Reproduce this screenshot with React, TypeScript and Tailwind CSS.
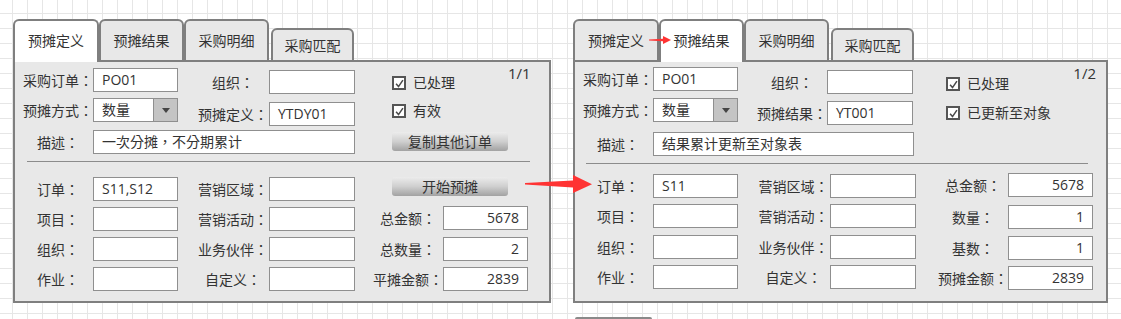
import React from "react"

const inputCls =
  "h-[24px] border border-[#8f8f8f] bg-white px-[8px] leading-[22px] whitespace-nowrap overflow-hidden"

type FieldProps = {
  label: string
  value?: string
  right?: boolean
  labelW?: string
  inputW?: string
  className?: string
}

function Field({ label, value, right, labelW = "w-[70px]", inputW = "w-[85px]", className = "" }: FieldProps) {
  return (
    <div className={`flex items-center ${className}`}>
      <div className={`${labelW} shrink-0 text-center whitespace-nowrap`}>{label}</div>
      <div className={`${inputCls} ${inputW} ${right ? "text-right" : ""}`}>{value}</div>
    </div>
  )
}

function SelectField() {
  return (
    <div className="flex items-center">
      <div className="w-[70px] shrink-0 text-center">预摊方式：</div>
      <div className="flex h-[24px] w-[85px] border border-[#8f8f8f] bg-white">
        <div className="flex-1 px-[8px] leading-[22px]">数量</div>
        <div className="flex w-[24px] items-center justify-center border-l border-[#8f8f8f] bg-[#c4c4c4]">
          <div className="h-0 w-0 border-t-[5px] border-r-[4px] border-l-[4px] border-t-[#454545] border-r-transparent border-l-transparent" />
        </div>
      </div>
    </div>
  )
}

function Check({ label, className = "" }: { label: string; className?: string }) {
  return (
    <div className={`flex h-[14px] items-center gap-[7px] ${className}`}>
      <div className="flex h-[14px] w-[14px] shrink-0 items-center justify-center border-2 border-[#555] bg-white">
        <svg viewBox="0 0 10 10" className="h-[9px] w-[9px]">
          <path d="M1.2 5.4 L3.9 8.4 L8.8 1.2" fill="none" stroke="#4a4a4a" strokeWidth="1.7" />
        </svg>
      </div>
      <span className="whitespace-nowrap leading-[20px]">{label}</span>
    </div>
  )
}

function Btn({ children, className = "" }: { children: React.ReactNode; className?: string }) {
  return (
    <div
      className={`h-[19px] w-[116px] rounded-[3px] bg-linear-to-b from-[#ececec] via-[#cfcfcf] to-[#a2a2a2] text-center leading-[19px] ${className}`}
    >
      {children}
    </div>
  )
}

function Tabs({ active }: { active: number }) {
  const names = ["预摊定义", "预摊结果", "采购明细"]
  return (
    <div className="relative z-10 -mb-[2px] flex items-end">
      {names.map((n, i) => (
        <div
          key={n}
          className={`flex items-center justify-center rounded-t-[6px] border-2 border-[#7f7f7f] ${
            i === 0 ? "w-[86px]" : "w-[85px]"
          } h-[43px] ${i === active ? "border-b-0 bg-white pb-[2px]" : "bg-[#e8e8e8]"}`}
        >
          {n}
        </div>
      ))}
      <div className="ml-[2px] flex h-[34px] w-[83px] items-center justify-center rounded-t-[6px] border-2 border-[#7f7f7f] bg-[#e8e8e8]">
        采购匹配
      </div>
    </div>
  )
}

function LeftPanel() {
  return (
    <div className="flex flex-col">
      <Tabs active={0} />
      <div className="flex h-[243px] w-[538px] flex-col border-2 border-[#7f7f7f] bg-[#e8e8e8]">
        <div className="flex items-start">
          <div className="ml-[8px] flex flex-col">
            <div className="mt-[6px] flex items-start">
              <Field label="采购订单：" value="PO01" />
              <Field className="mt-[2px] ml-[19px]" label="组织：" labelW="w-[72px]" inputW="w-[86px]" />
            </div>
            <div className="mt-[4px] flex items-start">
              <SelectField />
              <Field
                className="mt-[4px] ml-[19px]"
                label="预摊定义："
                value="YTDY01"
                labelW="w-[72px]"
                inputW="w-[86px]"
              />
            </div>
            <Field className="mt-[4px]" label="描述：" value="一次分摊，不分期累计" inputW="w-[262px]" />
          </div>
          <div className="ml-[37px] flex flex-col">
            <Check className="mt-[14px]" label="已处理" />
            <Check className="mt-[14px]" label="有效" />
            <Btn className="mt-[14px]">复制其他订单</Btn>
          </div>
          <div className="mt-[1px] mr-[20px] ml-auto text-[15px] leading-[20px]">1/1</div>
        </div>
        <div className="mt-[7px] ml-[12px] h-px w-[503px] bg-[#8c8c8c]" />
        <div className="mt-[15px] ml-[8px] flex items-start">
          <div className="flex flex-col gap-[6px]">
            <Field label="订单：" value="S11,S12" />
            <Field label="项目：" />
            <Field label="组织：" />
            <Field label="作业：" />
          </div>
          <div className="ml-[19px] flex flex-col gap-[6px]">
            <Field label="营销区域：" labelW="w-[72px]" inputW="w-[86px]" />
            <Field label="营销活动：" labelW="w-[72px]" inputW="w-[86px]" />
            <Field label="业务伙伴：" labelW="w-[72px]" inputW="w-[86px]" />
            <Field label="自定义：" labelW="w-[72px]" inputW="w-[86px]" />
          </div>
          <div className="ml-[18px] flex flex-col">
            <Btn className="ml-[19px]">开始预摊</Btn>
            <Field className="mt-[10px]" label="总金额：" value="5678" right />
            <Field className="mt-[7px]" label="总数量：" value="2" right />
            <Field className="mt-[6px]" label="平摊金额：" value="2839" right />
          </div>
        </div>
      </div>
    </div>
  )
}

function RightPanel() {
  return (
    <div className="flex flex-col">
      <Tabs active={1} />
      <div className="flex h-[243px] w-[535px] flex-col border-2 border-[#7f7f7f] bg-[#e8e8e8]">
        <div className="flex items-start">
          <div className="ml-[8px] flex flex-col">
            <div className="mt-[5px] flex items-start">
              <Field label="采购订单：" value="PO01" />
              <Field className="mt-[3px] ml-[19px]" label="组织：" inputW="w-[86px]" />
            </div>
            <div className="mt-[4px] flex items-start">
              <SelectField />
              <Field className="mt-[3px] ml-[19px]" label="预摊结果：" value="YT001" inputW="w-[86px]" />
            </div>
            <Field className="mt-[7px]" label="描述：" value="结果累计更新至对象表" inputW="w-[261px]" />
          </div>
          <div className="ml-[32px] flex flex-col">
            <Check className="mt-[15px]" label="已处理" />
            <Check className="mt-[15px]" label="已更新至对象" />
          </div>
          <div className="mt-[1px] mr-[10px] ml-auto text-[15px] leading-[20px]">1/2</div>
        </div>
        <div className="mt-[7px] ml-[11px] h-px w-[502px] bg-[#8c8c8c]" />
        <div className="mt-[10px] ml-[8px] flex items-start">
          <div className="flex flex-col">
            <Field label="订单：" value="S11" />
            <Field className="mt-[6px]" label="项目：" />
            <Field className="mt-[7px]" label="组织：" />
            <Field className="mt-[6px]" label="作业：" />
          </div>
          <div className="ml-[19px] flex flex-col">
            <Field label="营销区域：" labelW="w-[73px]" inputW="w-[86px]" />
            <Field className="mt-[6px]" label="营销活动：" labelW="w-[73px]" inputW="w-[86px]" />
            <Field className="mt-[7px]" label="业务伙伴：" labelW="w-[73px]" inputW="w-[86px]" />
            <Field className="mt-[6px]" label="自定义：" labelW="w-[73px]" inputW="w-[86px]" />
          </div>
          <div className="-mt-[1px] ml-[22px] flex flex-col">
            <Field label="总金额：" value="5678" right />
            <Field className="mt-[8px]" label="数量：" value="1" right />
            <Field className="mt-[7px]" label="基数：" value="1" right />
            <Field className="mt-[6px]" label="预摊金额：" value="2839" right />
          </div>
        </div>
      </div>
    </div>
  )
}

export default function App() {
  return (
    <div className="relative h-[319px] w-[1121px] overflow-hidden bg-white bg-[linear-gradient(to_right,#e6e6e6_1px,transparent_1px),linear-gradient(to_bottom,#e6e6e6_1px,transparent_1px)] bg-[size:15px_15px] bg-[position:12px_13px] font-['Open_Sans','Noto_Sans_CJK_TC',sans-serif] text-[14px] text-[#333]">
      <div className="flex gap-[22px] pt-[19px] pl-[13px]">
        <LeftPanel />
        <RightPanel />
      </div>
      <div className="absolute top-[317px] left-[575px] h-[2px] w-[77px] rounded-t-[2px] bg-[#8a8a8a]" />
      <svg className="pointer-events-none absolute inset-0 z-20" width="1121" height="319" viewBox="0 0 1121 319">
        <polygon points="525,183 573,180.5 573,175 592,184.3 573,193 573,187.5 525,184.5" fill="#ff3333" />
        <polygon points="649,39.5 663,38.8 663,36 671,40 663,44 663,41.2 649,40.5" fill="#ff3333" />
      </svg>
    </div>
  )
}
